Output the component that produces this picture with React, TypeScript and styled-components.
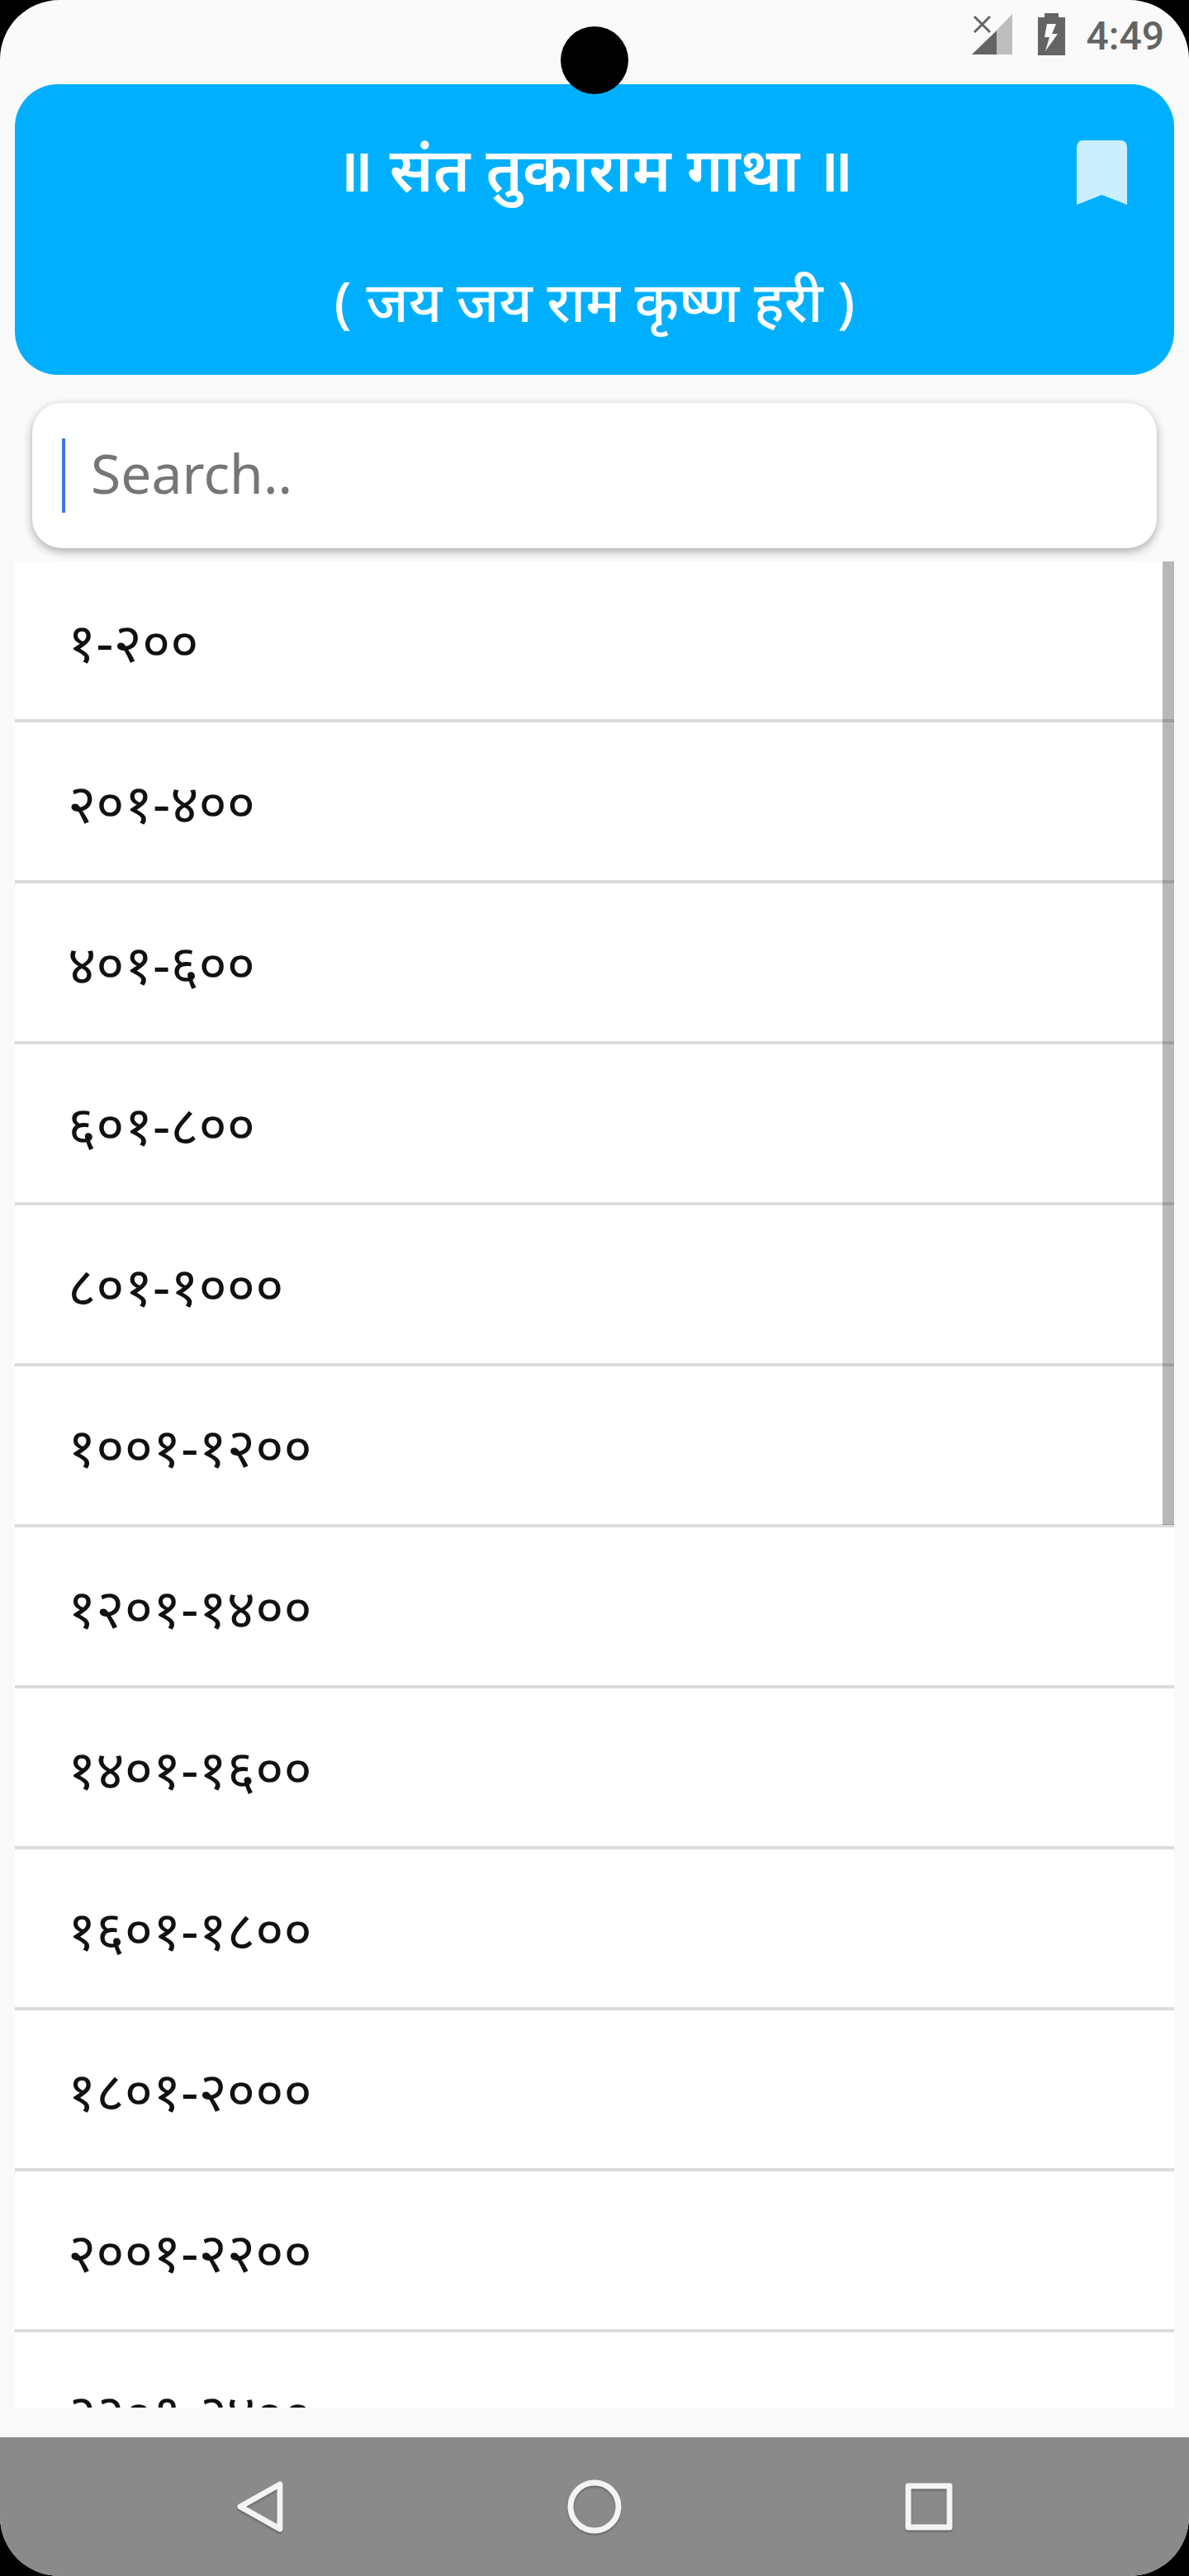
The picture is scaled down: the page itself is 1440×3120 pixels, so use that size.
import React from "react";
import styled, { createGlobalStyle } from "styled-components";

const GlobalStyle = createGlobalStyle`
  * { box-sizing: border-box; }
  html, body { margin: 0; background: #000; }
  body { font-family: "Noto Sans", "Noto Sans Devanagari", "Open Sans", sans-serif; }
`;

const Screen = styled.div`
  position: relative;
  display: flex;
  flex-direction: column;
  height: 100vh;
  overflow: hidden;
  border-radius: 72px;
  background: #fafafa;
`;

const Camera = styled.div`
  position: absolute;
  z-index: 2;
  top: 32px;
  left: 50%;
  width: 82px;
  height: 82px;
  margin-left: -41px;
  border-radius: 50%;
  background: #000;
`;

const StatusBar = styled.div`
  display: flex;
  flex: none;
  justify-content: flex-end;
  align-items: flex-start;
  height: 102px;
  padding: 16px 30px 0 0;
  color: #646464;
`;

const SignalIcon = styled.svg`
  width: 50px;
  height: 50px;
  margin-right: 30px;
`;

const BatteryIcon = styled.svg`
  width: 33px;
  height: 51px;
  margin-right: 26px;
`;

const Clock = styled.time`
  font-family: Roboto, sans-serif;
  font-size: 48px;
  font-weight: 500;
  line-height: 56px;
`;

const Header = styled.header`
  display: grid;
  flex: none;
  grid-template-columns: 1fr auto 1fr;
  grid-template-rows: 90px 80px;
  row-gap: 70px;
  margin: 0 18px;
  padding: 62px 57px 50px;
  border-radius: 52px;
  background: #00b0ff;
  color: #fff;
`;

const Title = styled.h1`
  grid-column: 2;
  margin: 0;
  font-size: 74px;
  font-weight: 600;
  line-height: 80px;
  text-align: center;
  white-space: nowrap;
`;

const Subtitle = styled.p`
  grid-column: 1 / -1;
  margin: 0;
  font-size: 68px;
  font-weight: 500;
  line-height: 80px;
  text-align: center;
  white-space: nowrap;
`;

const BookmarkButton = styled.button`
  grid-column: 3;
  grid-row: 1;
  align-self: center;
  justify-self: end;
  display: flex;
  padding: 0;
  border: 0;
  background: none;
  color: #ccefff;
`;

const SearchBox = styled.label`
  display: flex;
  flex: none;
  align-items: center;
  height: 176px;
  margin: 34px 39px 16px;
  padding: 0 36px;
  border-radius: 36px;
  background: #fff;
  box-shadow: 0 4px 12px rgba(0, 0, 0, 0.32);
`;

const Caret = styled.span`
  flex: none;
  width: 4px;
  height: 90px;
  background: #3b78e7;
`;

const SearchInput = styled.input`
  flex: 1;
  min-width: 0;
  height: 100px;
  padding: 0 0 8px 31px;
  border: 0;
  outline: 0;
  background: none;
  color: #111;
  font-family: inherit;
  font-size: 66px;
  &::placeholder {
    color: #767676;
    opacity: 1;
  }
`;

const ListFrame = styled.main`
  position: relative;
  z-index: 1;
  flex: 1;
  min-height: 0;
  margin: 0 18px 36px;
  overflow: hidden;
  background: #fff;
`;

const List = styled.ul`
  margin: 0;
  padding: 0;
  list-style: none;
`;

const Row = styled.li`
  border-bottom: 4px solid #dcdcdc;
`;

const RowLink = styled.a`
  display: flex;
  align-items: center;
  height: 191px;
  padding: 0 64px;
  color: #111;
  font-size: 66px;
  font-weight: 400;
  line-height: 80px;
  text-decoration: none;
`;

const ScrollThumb = styled.div`
  position: absolute;
  top: 0;
  right: 0;
  width: 14px;
  height: 1167px;
  background: rgba(0, 0, 0, 0.28);
`;

const NavBar = styled.nav`
  display: flex;
  flex: none;
  justify-content: center;
  gap: 309px;
  align-items: center;
  height: 168px;
  background: #8a8a8a;
`;

const NavButton = styled.button`
  display: flex;
  padding: 0;
  border: 0;
  background: none;
  color: #f4f4f4;
  svg {
    width: 96px;
    height: 96px;
    fill: none;
    stroke: currentColor;
    stroke-linejoin: round;
    filter: drop-shadow(0 2px 1px rgba(0, 0, 0, 0.25));
  }
`;

const ranges = [
  "१-२००",
  "२०१-४००",
  "४०१-६००",
  "६०१-८००",
  "८०१-१०००",
  "१००१-१२००",
  "१२०१-१४००",
  "१४०१-१६००",
  "१६०१-१८००",
  "१८०१-२०००",
  "२००१-२२००",
  "२२०१-२४००",
];

export default function App() {
  return (
    <>
      <GlobalStyle />
      <Screen>
        <Camera />
        <StatusBar>
          <SignalIcon viewBox="0 0 50 50" aria-hidden="true">
            <path d="M30 20.500L49 1V50H30Z" fill="#bebebe" />
            <path d="M0 50L30 21V50Z" fill="currentColor" />
            <path d="M3 4L22 23M22 4L3 23" stroke="currentColor" strokeWidth="3" />
          </SignalIcon>
          <BatteryIcon viewBox="0 0 33 51" aria-hidden="true">
            <path
              fillRule="evenodd"
              fill="currentColor"
              d="M8 0H25V5H33V51H0V5H8ZM11 13L8 29H14L9 46L24 25H17L22 13Z"
            />
          </BatteryIcon>
          <Clock>4:49</Clock>
        </StatusBar>
        <Header>
          <Title>॥ संत तुकाराम गाथा ॥</Title>
          <BookmarkButton type="button" aria-label="Bookmarks">
            <svg width="61" height="78" viewBox="0 0 61 78" aria-hidden="true">
              <path d="M8 0H53Q61 0 61 9V78L30.500 66L0 78V9Q0 0 8 0Z" fill="currentColor" />
            </svg>
          </BookmarkButton>
          <Subtitle>( जय जय राम कृष्ण हरी )</Subtitle>
        </Header>
        <SearchBox>
          <Caret />
          <SearchInput type="text" placeholder="Search.." aria-label="Search" />
        </SearchBox>
        <ListFrame>
          <List>
            {ranges.map((range) => (
              <Row key={range}>
                <RowLink href="#">{range}</RowLink>
              </Row>
            ))}
          </List>
          <ScrollThumb />
        </ListFrame>
        <NavBar>
          <NavButton type="button" aria-label="Back">
            <svg viewBox="0 0 96 96">
              <path d="M72 21V75L24 48Z" strokeWidth="7" />
            </svg>
          </NavButton>
          <NavButton type="button" aria-label="Home">
            <svg viewBox="0 0 96 96">
              <circle cx="48" cy="48" r="29" strokeWidth="7" />
            </svg>
          </NavButton>
          <NavButton type="button" aria-label="Recent apps">
            <svg viewBox="0 0 96 96">
              <rect x="23" y="23" width="50" height="50" strokeWidth="7" />
            </svg>
          </NavButton>
        </NavBar>
      </Screen>
    </>
  );
}
